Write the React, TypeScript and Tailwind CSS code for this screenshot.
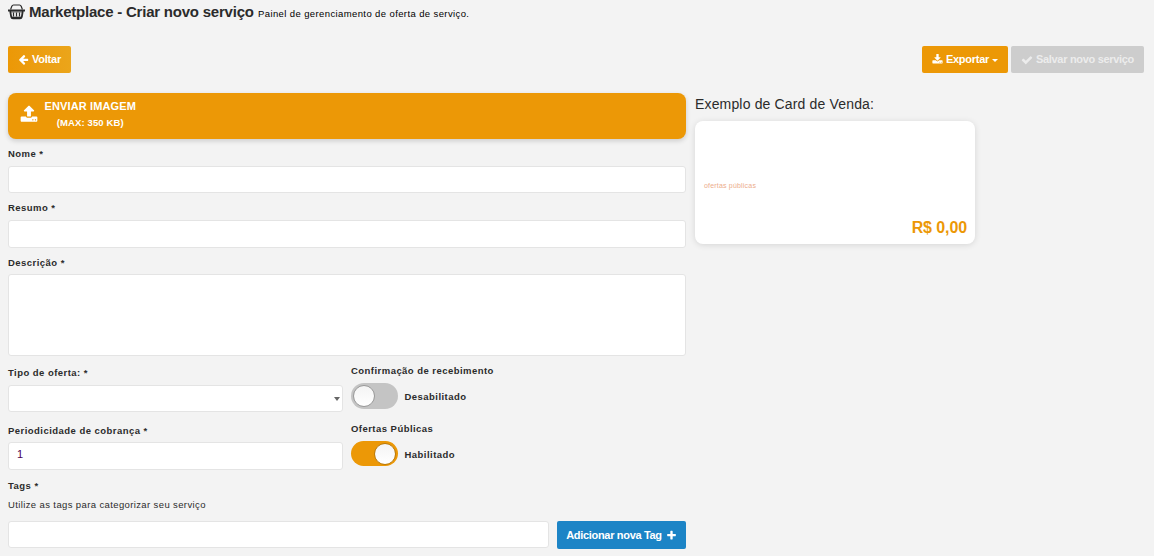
import { type ReactNode } from 'react';

const ICONS = {
  arrow:
    'M1664 896v128q0 53-32.5 90.5t-84.5 37.5h-704l293 294q38 36 38 90t-38 90l-75 76q-37 37-90 37-52 0-91-37l-651-652q-37-37-37-90 0-52 37-91l651-650q38-38 91-38 52 0 90 38l75 74q38 38 38 91t-38 91l-293 293h704q52 0 84.5 37.5t32.5 90.5z',
  check:
    'M1671 566q0 40-28 68l-724 724-136 136q-28 28-68 28t-68-28l-136-136-362-362q-28-28-28-68t28-68l136-136q28-28 68-28t68 28l294 295 656-657q28-28 68-28t68 28l136 136q28 28 28 68z',
  plus:
    'M1600 736v192q0 40-28 68t-68 28h-416v416q0 40-28 68t-68 28h-192q-40 0-68-28t-28-68v-416h-416q-40 0-68-28t-28-68v-192q0-40 28-68t68-28h416v-416q0-40 28-68t68-28h192q40 0 68 28t28 68v416h416q40 0 68 28t28 68z',
  download:
    'M1344 1344q0-26-19-45t-45-19-45 19-19 45 19 45 45 19 45-19 19-45zm256 0q0-26-19-45t-45-19-45 19-19 45 19 45 45 19 45-19 19-45zm128-224v320q0 40-28 68t-68 28h-1472q-40 0-68-28t-28-68v-320q0-40 28-68t68-28h465l135 136q58 56 136 56t136-56l136-136h464q40 0 68 28t28 68zm-325-569q17 41-14 70l-448 448q-18 19-45 19t-45-19l-448-448q-31-29-14-70 17-39 59-39h256v-448q0-26 19-45t45-19h256q26 0 45 19t19 45v448h256q42 0 59 39z',
  upload:
    'M1344 1472q0-26-19-45t-45-19-45 19-19 45 19 45 45 19 45-19 19-45zm256 0q0-26-19-45t-45-19-45 19-19 45 19 45 45 19 45-19 19-45zm128-224v320q0 40-28 68t-68 28h-1472q-40 0-68-28t-28-68v-320q0-40 28-68t68-28h427q21 56 70.5 92t110.5 36h256q61 0 110.5-36t70.5-92h427q40 0 68 28t28 68zm-325-648q-17 40-59 40h-256v448q0 26-19 45t-45 19h-256q-26 0-45-19t-19-45v-448h-256q-42 0-59-40-17-39 14-69l448-448q18-19 45-19t45 19l448 448q31 30 14 69z',
};

function Icon({ name, className }: { name: keyof typeof ICONS; className: string }) {
  return (
    <svg viewBox="0 0 1792 1792" fill="currentColor" className={`shrink-0 ${className}`}>
      <path d={ICONS[name]} />
    </svg>
  );
}

function Basket() {
  return (
    <svg viewBox="0 0 17 16" className="mt-1 h-4 w-[17px] shrink-0" fill="none" stroke="#2b2b2b">
      <path d="M2.6 5.5 3.8 2.2Q4.3 1 5.5 1h6q1.2 0 1.7 1.2l1.2 3.3" strokeWidth="1.2" />
      <path d="M0 6.5h17" strokeWidth="2" />
      <path d="M2.2 7l1 5.8q.3 1.5 1.7 1.5h7.2q1.4 0 1.7-1.5L14.8 7" strokeWidth="1.8" />
      <path d="M5.5 8.5v4M8.5 8.5v4M11.5 8.5v4" strokeWidth="1.2" />
      <path d="M2.5 8h12" strokeWidth="1" strokeOpacity=".65" />
      <path d="M4 13.5h9" strokeWidth="1.6" />
    </svg>
  );
}

function Label({ children, className = '' }: { children: ReactNode; className?: string }) {
  return (
    <label className={`block h-3 whitespace-nowrap text-[9.5px] leading-3 font-bold tracking-[0.46px] text-[#2b2b2b] ${className}`}>
      {children}
    </label>
  );
}

const FIELD = 'block w-full rounded-[3px] border border-[#e4e4e4] bg-white outline-none';

function Toggle({ on, text }: { on: boolean; text: string }) {
  return (
    <div className="flex h-[26px] items-start">
      <span
        className={`flex w-[47px] items-center rounded-full px-0.5 ${on ? 'h-[25px] justify-end bg-[#ec9806]' : 'h-[26px] bg-[#c4c4c4]'}`}
      >
        <span
          className={`size-[22px] rounded-full border bg-linear-to-b from-[#f4f4f4] to-white ${on ? 'border-[#b97a0c]' : 'border-[#999]'}`}
        />
      </span>
      <span className="mt-2 ml-[6.5px] text-[9.5px] leading-3 font-bold tracking-[0.46px]">{text}</span>
    </div>
  );
}

export default function App() {
  return (
    <div className="h-[556px] w-[1154px] overflow-hidden bg-[#f3f3f3] px-2 font-['Liberation_Sans',Arial,sans-serif] text-[#2b2b2b]">
      <header className="flex h-[26px] items-start">
        <Basket />
        <h1 className="ml-1 w-[225px] text-[15px] leading-6 font-bold tracking-[-0.22px] whitespace-nowrap">
          Marketplace - Criar novo serviço
        </h1>
        <span className="mt-2 ml-1 text-[9.5px] leading-3 tracking-[0.39px] whitespace-nowrap text-black">
          Painel de gerenciamento de oferta de serviço.
        </span>
      </header>

      <div className="mt-5 flex h-[27px] justify-between pr-0.5 text-[11px] font-bold text-white">
        <button className="flex w-[63px] items-center justify-center gap-[3px] rounded-[2px] bg-linear-to-r from-[#ec9806] to-[#eba51a] tracking-[-0.2px]">
          <Icon name="arrow" className="size-[11px]" />
          Voltar
        </button>
        <div className="flex gap-[3px]">
          <button className="flex w-[86px] items-center justify-center gap-[3px] rounded-[2px] bg-[#ec9806] tracking-[-0.25px]">
            <Icon name="download" className="size-[11px]" />
            Exportar
            <span className="mt-0.5 border-x-[3px] border-t-[3px] border-x-transparent border-t-white" />
          </button>
          <button className="flex w-[133px] items-center justify-center gap-[3px] rounded-[2px] bg-[#cdcdcd] tracking-[-0.31px] whitespace-nowrap text-[#ececec]">
            <Icon name="check" className="size-[12px]" />
            Salvar novo serviço
          </button>
        </div>
      </div>

      <main className="mt-5 flex gap-[9px]">
        <section className="w-[678px]">
          <button className="flex h-[46px] w-full rounded-lg bg-[#ec9806] pl-3 text-white shadow-[0_2px_5px_rgba(0,0,0,0.16)]">
            <Icon name="upload" className="mt-3 size-[18px]" />
            <span className="ml-[6.5px] flex flex-col items-center pt-[7px] text-[11px] leading-3 font-bold tracking-[0.13px]">
              <span>ENVIAR IMAGEM</span>
              <span className="mt-1 text-[9.5px] leading-[14px]">(MAX: 350 KB)</span>
            </span>
          </button>

          <Label className="mt-[9px]">Nome *</Label>
          <input className={`${FIELD} mt-1.5 h-[27px]`} />
          <Label className="mt-[9px]">Resumo *</Label>
          <input className={`${FIELD} mt-1.5 h-7`} />
          <Label className="mt-[9px]">Descrição *</Label>
          <textarea className={`${FIELD} mt-[5px] h-[82px] resize-none`} />

          <div className="flex gap-2">
            <div className="w-[335px]">
              <Label className="mt-[11px]">Tipo de oferta: *</Label>
              <div className={`${FIELD} mt-1.5 h-[27px]`}>
                <div className="flex h-full items-center justify-end pr-[2px]">
                  <span className="border-x-[3.5px] border-t-[4px] border-x-transparent border-t-[#666]" />
                </div>
              </div>
              <Label className="mt-[13px]">Periodicidade de cobrança *</Label>
              <input className={`${FIELD} mt-[5px] h-7 px-2 pb-1 text-[11px] text-[#4b0055]`} defaultValue="1" />
            </div>
            <div>
              <Label className="mt-[9px]">Confirmação de recebimento</Label>
              <div className="mt-1.5">
                <Toggle on={false} text="Desabilitado" />
              </div>
              <Label className="mt-3.5">Ofertas Públicas</Label>
              <div className="mt-1.5">
                <Toggle on text="Habilitado" />
              </div>
            </div>
          </div>

          <Label className="mt-2.5">Tags *</Label>
          <p className="mt-[7px] text-[9.5px] leading-3 tracking-[0.38px]">Utilize as tags para categorizar seu serviço</p>
          <div className="mt-2.5 flex gap-2">
            <input className={`${FIELD} h-[27px] min-w-0 flex-1`} />
            <button className="flex h-7 w-[129px] items-center justify-center gap-1 rounded-[2px] bg-[#1c84c6] text-[11px] font-bold tracking-[-0.32px] whitespace-nowrap text-white">
              Adicionar nova Tag
              <Icon name="plus" className="size-[11px]" />
            </button>
          </div>
        </section>

        <aside className="w-[280px] pt-[3px]">
          <h2 className="text-sm leading-4 tracking-[0.16px] whitespace-nowrap">Exemplo de Card de Venda:</h2>
          <div className="mt-[9px] flex h-[123px] flex-col justify-between rounded-lg bg-white pr-2 pl-[9px] shadow-[0_1px_6px_rgba(0,0,0,0.12)]">
            <span className="mt-[61px] text-[7px] leading-2 tracking-[0.19px] text-[#ecac8c]">ofertas públicas</span>
            <strong className="mb-[6px] text-right text-base leading-5 tracking-[-0.1px] text-[#ec9806]">R$ 0,00</strong>
          </div>
        </aside>
      </main>
    </div>
  );
}
